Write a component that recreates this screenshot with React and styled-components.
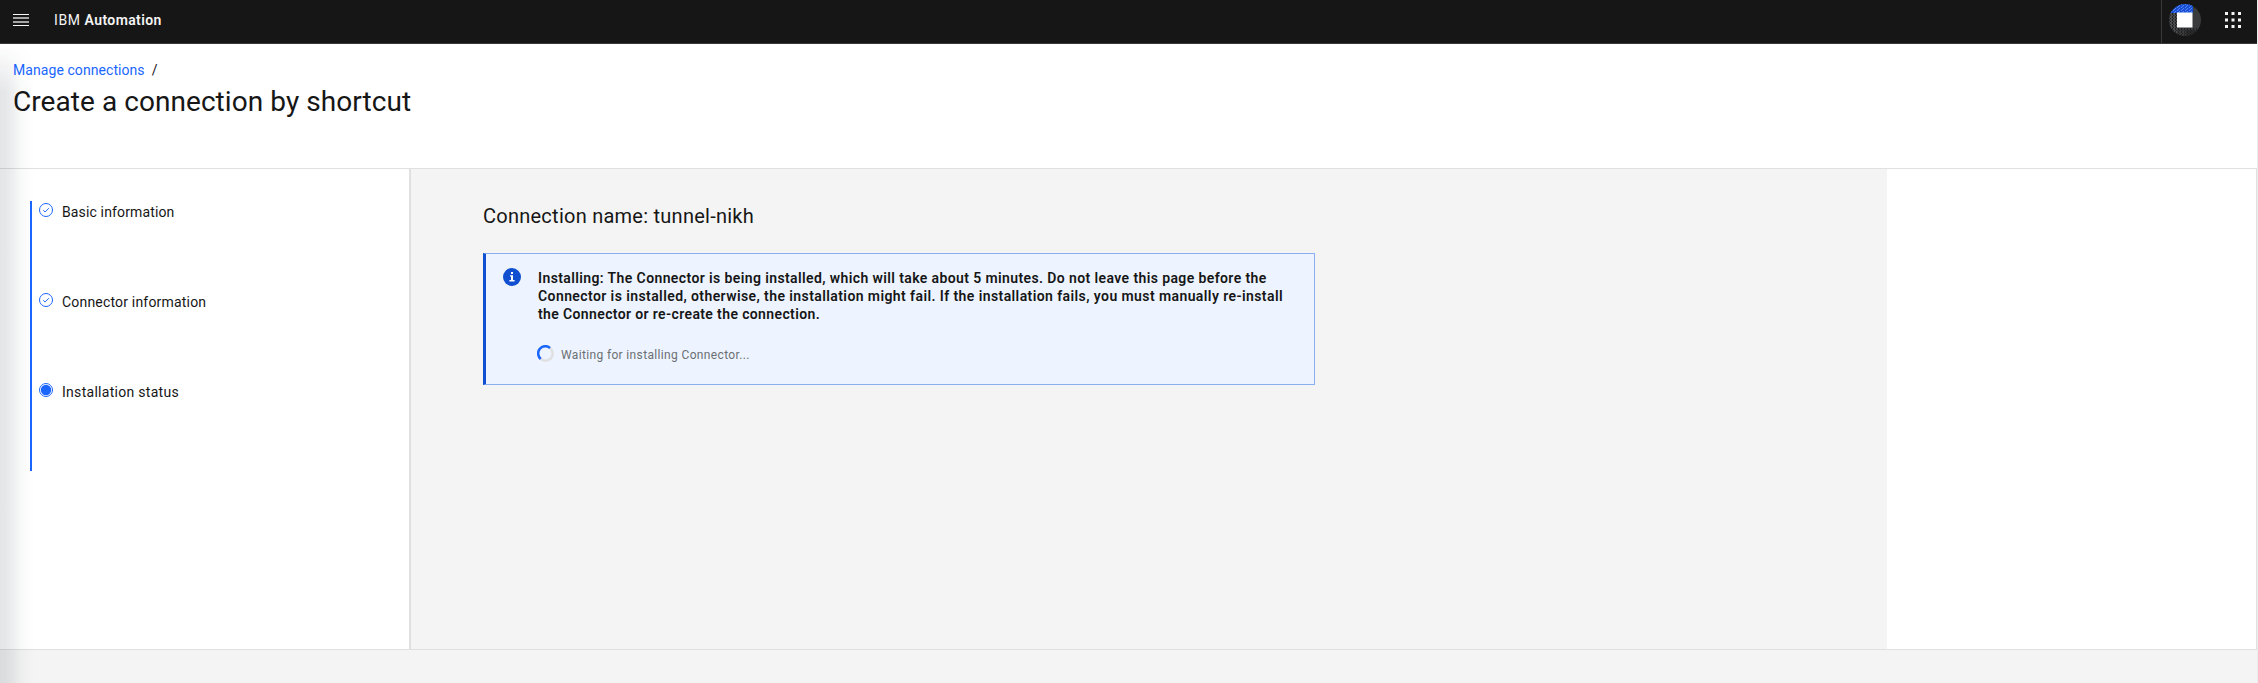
import React from 'react';
import styled, { createGlobalStyle } from 'styled-components';

const Global = createGlobalStyle`
  * { box-sizing: border-box; }
  body {
    margin: 0;
    overflow: hidden;
    background: #ffffff;
    color: #161616;
    font-family: Roboto, "Liberation Sans", sans-serif;
    font-size: 14px;
    line-height: 18px;
  }
  h1, h2, p, ol { margin: 0; padding: 0; font-weight: 400; }
`;

const Page = styled.div`
  position: relative;
  display: flex;
  flex-direction: column;
  height: 683px;
  border-right: 1px solid #ececec;
`;

const EdgeShadow = styled.div`
  position: absolute;
  top: 44px;
  bottom: 0;
  left: 0;
  width: 34px;
  pointer-events: none;
  background: linear-gradient(
    to right,
    rgba(20, 30, 45, 0.115) 0,
    rgba(20, 30, 45, 0.1) 7px,
    rgba(20, 30, 45, 0.065) 14px,
    rgba(20, 30, 45, 0.03) 20px,
    rgba(20, 30, 45, 0.01) 28px,
    transparent
  );
  mask-image: linear-gradient(to bottom, transparent, #000 48px);
`;

const Header = styled.header`
  display: flex;
  align-items: stretch;
  height: 44px;
  padding-left: 13px;
  flex: none;
  background: #161616;
  border-bottom: 1px solid #393939;
  color: #f4f4f4;
`;

const MenuIcon = styled.svg`
  width: 16px;
  height: 12px;
  margin-top: 14px;
`;

const Brand = styled.div`
  display: flex;
  gap: 4px;
  margin: 11px 0 0 25px;
  font-weight: 400;
  letter-spacing: 0.58px;
`;

const Product = styled.strong`
  font-weight: 600;
  letter-spacing: 0.4px;
`;

const HeaderTools = styled.div`
  display: flex;
  align-items: flex-start;
  gap: 24px;
  margin-left: auto;
  padding: 4px 16px 0 7px;
  border-left: 1px solid #393939;
`;

const Avatar = styled.svg`
  width: 32px;
  height: 32px;
`;

const Switcher = styled.svg`
  width: 16px;
  height: 16px;
  margin-top: 8px;
`;

const TitleBar = styled.section`
  height: 125px;
  flex: none;
  padding: 17px 0 0 13px;
  border-bottom: 1px solid #e0e0e0;
`;

const Breadcrumb = styled.nav`
  display: flex;
  gap: 7px;
  letter-spacing: 0.07px;
`;

const Crumb = styled.a`
  color: #1a66ff;
`;

const PageTitle = styled.h1`
  margin-top: 5px;
  font-size: 28px;
  line-height: 36px;
  letter-spacing: 0.06px;
`;

const Body = styled.div`
  display: flex;
  height: 480px;
  flex: none;
  border-right: 1px solid #e0e0e0;
`;

const Sidebar = styled.aside`
  width: 411px;
  flex: none;
  padding: 32px 0 0 30px;
  border-right: 2px solid #e0e0e0;
`;

const Steps = styled.ol`
  list-style: none;
  border-left: 2px solid #1a66ff;
`;

const Step = styled.li`
  display: flex;
  gap: 9px;
  height: 90px;
  padding: 2px 0 0 7px;
  letter-spacing: ${(p) => p.$tracking}px;
`;

const StepIcon = styled.svg`
  width: 14px;
  height: 14px;
`;

const Content = styled.main`
  width: 1476px;
  flex: none;
  padding: 33px 0 0 72px;
  background: #f4f4f4;
`;

const ConnectionName = styled.h2`
  font-size: 20px;
  line-height: 28px;
  letter-spacing: 0.25px;
`;

const Notification = styled.section`
  display: flex;
  gap: 17px;
  width: 832px;
  height: 132px;
  margin-top: 23px;
  padding: 14px 0 0 17px;
  background: #edf4ff;
  border: 1px solid #8aafef;
  border-left: 3px solid #0f4fd0;
`;

const InfoIcon = styled.svg`
  width: 18px;
  height: 18px;
  flex: none;
`;

const Message = styled.p`
  padding-top: 1px;
  font-weight: 600;
`;

const Line = styled.span`
  display: block;
  white-space: nowrap;
  letter-spacing: ${(p) => p.$tracking}px;
`;

const Progress = styled.div`
  display: flex;
  gap: 7px;
  margin: 22px 0 0 -1px;
  color: #6b6f73;
  font-size: 12px;
  line-height: 16px;
  letter-spacing: 0.35px;
`;

const Spinner = styled.svg`
  width: 17px;
  height: 17px;
`;

const ProgressText = styled.span`
  padding-top: 2px;
`;

const Footer = styled.footer`
  flex: 1;
  background: #f4f4f4;
  border-top: 1px solid #e0e0e0;
`;

const steps = [
  { label: 'Basic information', done: true, tracking: 0.14 },
  { label: 'Connector information', done: true, tracking: 0.19 },
  { label: 'Installation status', done: false, tracking: 0.29 },
];

const message = [
  ['Installing: The Connector is being installed, which will take about 5 minutes. Do not leave this page before the', 0.39],
  ['Connector is installed, otherwise, the installation might fail. If the installation fails, you must manually re-install', 0.41],
  ['the Connector or re-create the connection.', 0.373],
];

function StepMark({ done }) {
  return (
    <StepIcon viewBox="0 0 14 14" fill="none" stroke="#1a66ff">
      <circle cx="7" cy="7" r="6.5" />
      {done ? <path d="M4.3 7.2 6.1 9 9.9 5.2" /> : <circle cx="7" cy="7" r="5.2" fill="#1a66ff" stroke="none" />}
    </StepIcon>
  );
}

export default function App() {
  return (
    <>
      <Global />
      <Page>
        <Header>
          <MenuIcon viewBox="0 0 16 12">
            <path fill="#f4f4f4" d="M0 0h16v1H0zM0 11h16v1H0z" />
            <path fill="#a5a5a5" d="M0 3h16v2H0zM0 7h16v2H0z" />
          </MenuIcon>
          <Brand>
            <span>IBM</span>
            <Product>Automation</Product>
          </Brand>
          <HeaderTools>
            <Avatar viewBox="0 0 32 32">
              <defs>
                <clipPath id="disc"><circle cx="16" cy="16" r="16" /></clipPath>
                <pattern id="speckle" width="4" height="3" patternUnits="userSpaceOnUse">
                  <path fill="#5c87e8" d="M0 0h1v1H0zM2 1h1v1H2zM1 2h1v1H1z" />
                </pattern>
                <pattern id="weave" width="3" height="3" patternUnits="userSpaceOnUse">
                  <path fill="#202020" d="M0 0h1v2H0zM1 2h1v1H1z" />
                </pattern>
              </defs>
              <g clipPath="url(#disc)">
                <path fill="#393b3d" d="M0 0h32v32H0z" />
                <path fill="#4a4c4e" d="M0 9h8v23H0z" />
                <path fill="url(#weave)" d="M0 9h8v23H0zM8 24h24v8H8z" />
                <path fill="#174fd6" d="M0 0h24v9H0z" />
                <path fill="url(#speckle)" d="M0 0h24v9H0z" />
                <path fill="#202020" d="M17 26h15v6H17z" opacity=".6" />
              </g>
              <path fill="#ffffff" d="M8 8.5h15.5v15H8z" />
            </Avatar>
            <Switcher viewBox="0 0 16 16" fill="#f4f4f4">
              {[0, 6.5, 13].map((y) =>
                [0, 6.5, 13].map((x) => <rect key={`${x}-${y}`} x={x} y={y} width="3" height="3" />)
              )}
            </Switcher>
          </HeaderTools>
        </Header>
        <TitleBar>
          <Breadcrumb>
            <Crumb>Manage connections</Crumb>
            <span>/</span>
          </Breadcrumb>
          <PageTitle>Create a connection by shortcut</PageTitle>
        </TitleBar>
        <Body>
          <Sidebar>
            <Steps>
              {steps.map((s) => (
                <Step key={s.label} $tracking={s.tracking}>
                  <StepMark done={s.done} />
                  {s.label}
                </Step>
              ))}
            </Steps>
          </Sidebar>
          <Content>
            <ConnectionName>Connection name: tunnel-nikh</ConnectionName>
            <Notification>
              <InfoIcon viewBox="0 0 18 18">
                <circle cx="9" cy="9" r="9" fill="#0f4fd0" />
                <path fill="#ffffff" d="M8 4h2v2H8zM7 7.2h3V12h1.6v1.4H6.4V12H8V8.6H7z" />
              </InfoIcon>
              <div>
                <Message>
                  {message.map(([text, tracking]) => (
                    <Line key={text} $tracking={tracking}>{text}</Line>
                  ))}
                </Message>
                <Progress>
                  <Spinner viewBox="0 0 17 17" fill="none" strokeWidth="2.6">
                    <circle cx="8.5" cy="8.5" r="7.2" stroke="#e0e0e0" />
                    <path stroke="#1a66ff" d="M3.7 13.9A7.2 7.2 0 0 1 13 2.9" />
                  </Spinner>
                  <ProgressText>Waiting for installing Connector...</ProgressText>
                </Progress>
              </div>
            </Notification>
          </Content>
        </Body>
        <Footer />
        <EdgeShadow />
      </Page>
    </>
  );
}
